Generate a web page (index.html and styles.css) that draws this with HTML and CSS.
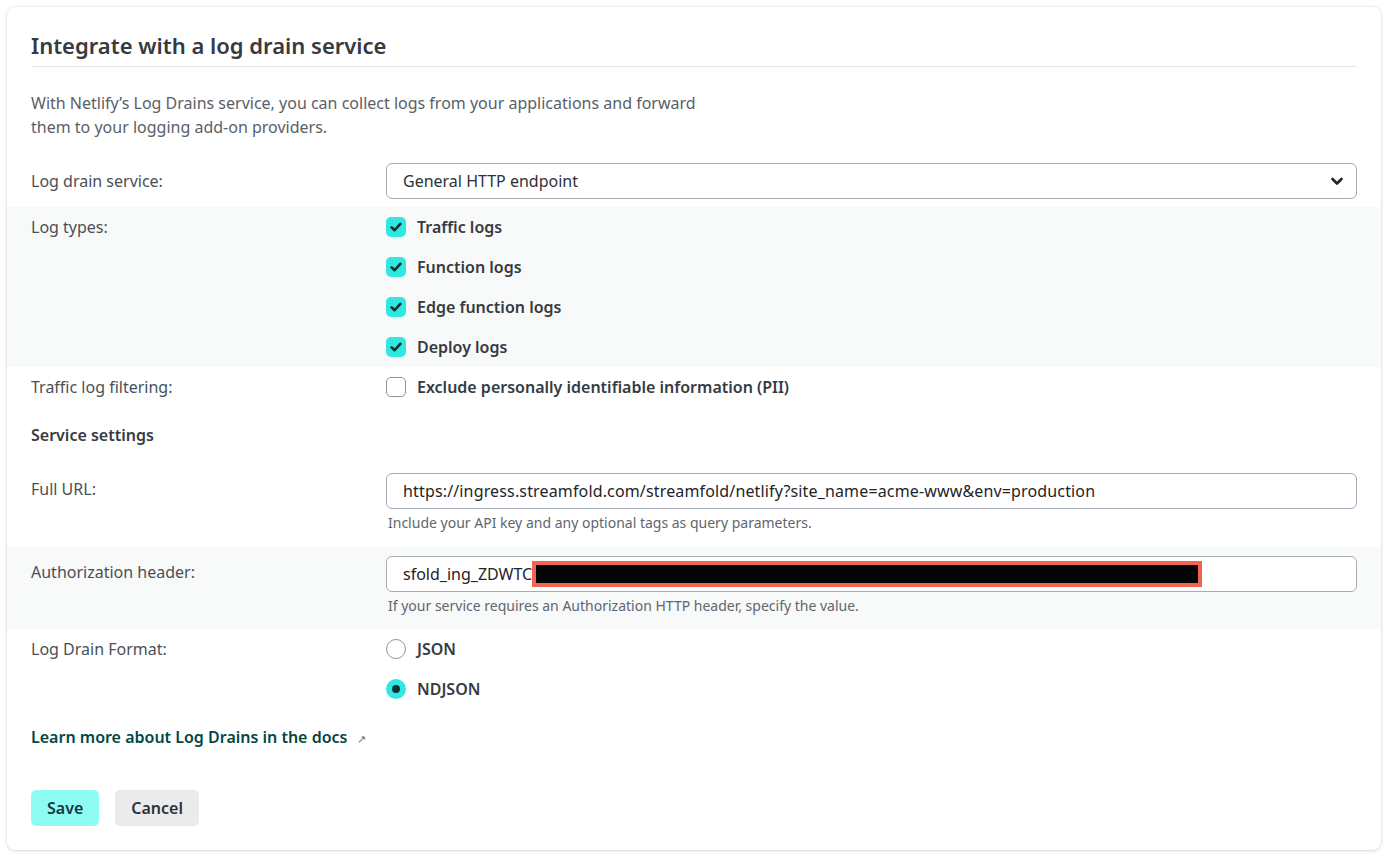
FILE: index.html
```html
<!DOCTYPE html>
<html>
<head>
  <title>Log Drains</title>
  <link rel="stylesheet" href="styles.css">
</head>
<body>
  <div class="card">
    <h2 class="card-title">Integrate with a log drain service</h2>
    <p class="intro">With Netlify’s Log Drains service, you can collect logs from your applications and forward them to your logging add-on providers.</p>

    <div class="row row-input">
      <div class="label">Log drain service:</div>
      <div class="control">
        <div class="select">
          <span>General HTTP endpoint</span>
          <svg class="chevron" width="14" height="14" viewBox="0 0 14 14"><polyline points="2.5,5 7,9.5 11.5,5" fill="none" stroke="#1f2428" stroke-width="2.6" stroke-linecap="round" stroke-linejoin="round"/></svg>
        </div>
      </div>
    </div>

    <div class="row row-options shaded">
      <div class="label">Log types:</div>
      <div class="control">
        <div class="option"><span class="check on"><svg width="14" height="14" viewBox="0 0 14 14"><polyline points="2.6,7.4 5.6,10.2 11.4,3.8" fill="none" stroke="#10302f" stroke-width="2.6" stroke-linecap="round" stroke-linejoin="round"/></svg></span>Traffic logs</div>
        <div class="option"><span class="check on"><svg width="14" height="14" viewBox="0 0 14 14"><polyline points="2.6,7.4 5.6,10.2 11.4,3.8" fill="none" stroke="#10302f" stroke-width="2.6" stroke-linecap="round" stroke-linejoin="round"/></svg></span>Function logs</div>
        <div class="option"><span class="check on"><svg width="14" height="14" viewBox="0 0 14 14"><polyline points="2.6,7.4 5.6,10.2 11.4,3.8" fill="none" stroke="#10302f" stroke-width="2.6" stroke-linecap="round" stroke-linejoin="round"/></svg></span>Edge function logs</div>
        <div class="option"><span class="check on"><svg width="14" height="14" viewBox="0 0 14 14"><polyline points="2.6,7.4 5.6,10.2 11.4,3.8" fill="none" stroke="#10302f" stroke-width="2.6" stroke-linecap="round" stroke-linejoin="round"/></svg></span>Deploy logs</div>
      </div>
    </div>

    <div class="row row-options">
      <div class="label">Traffic log filtering:</div>
      <div class="control">
        <div class="option"><span class="check"></span>Exclude personally identifiable information (PII)</div>
      </div>
    </div>

    <h3 class="section-title">Service settings</h3>

    <div class="row row-field first-field">
      <div class="label">Full URL:</div>
      <div class="control">
        <div class="input url">https://ingress.streamfold.com/streamfold/netlify?site_name=acme-www&amp;env=production</div>
        <div class="help">Include your API key and any optional tags as query parameters.</div>
      </div>
    </div>

    <div class="row row-field shaded">
      <div class="label">Authorization header:</div>
      <div class="control">
        <div class="input">sfold_ing_ZDWTC<span class="redacted"></span></div>
        <div class="help">If your service requires an Authorization HTTP header, specify the value.</div>
      </div>
    </div>

    <div class="row row-options">
      <div class="label">Log Drain Format:</div>
      <div class="control">
        <div class="option"><span class="radio"></span>JSON</div>
        <div class="option"><span class="radio on"></span>NDJSON</div>
      </div>
    </div>

    <a class="docs-link" href="#">Learn more about Log Drains in the docs<span class="ext">↗</span></a>

    <div class="actions">
      <button class="btn btn-primary">Save</button>
      <button class="btn btn-secondary">Cancel</button>
    </div>
  </div>
</body>
</html>
```

FILE: styles.css
```css
body {
  margin: 0;
  background: #fff;
  font-family: "Noto Sans", "Open Sans", sans-serif;
  color: #2f353b;
}

.card {
  margin: 7px 10px 12px 7px;
  padding: 24px 24px 24px 24px;
  background: #fff;
  border-radius: 8px;
  box-shadow: 0 0 0 1px rgba(0, 0, 0, 0.04), 0 1px 4px rgba(0, 0, 0, 0.12);
}

.card-title {
  margin: 0;
  padding-bottom: 7px;
  border-bottom: 1px solid #e4e7ea;
  font-size: 22px;
  line-height: 28px;
  font-weight: 600;
  color: #353b41;
}

.intro {
  margin: 24px 0 24px 0;
  max-width: 680px;
  font-size: 16px;
  line-height: 24px;
  color: #5a6068;
}

.row {
  display: grid;
  grid-template-columns: 355px 1fr;
  margin: 0 -24px;
  padding: 0 24px;
}

.shaded {
  background: #f8f9f9;
}

.label {
  font-size: 16px;
  line-height: 24px;
  color: #4a5057;
}

.row-input {
  padding-bottom: 8px;
}

.row-input .label {
  padding-top: 6px;
}

.row-options .label {
  padding-top: 8px;
}

.row-field {
  padding-top: 9px;
  padding-bottom: 13px;
}

.first-field {
  padding-bottom: 14px;
}

.row-field .label {
  padding-top: 4px;
}

.select {
  display: flex;
  align-items: center;
  justify-content: space-between;
  height: 34px;
  padding: 0 12px 0 16px;
  border: 1px solid #a3acb7;
  border-radius: 6px;
  font-size: 16px;
  color: #2d3238;
}

.option {
  display: flex;
  align-items: center;
  height: 40px;
  font-size: 16px;
  font-weight: 600;
  color: #353b41;
}

.check {
  display: inline-flex;
  align-items: center;
  justify-content: center;
  box-sizing: border-box;
  width: 20px;
  height: 20px;
  margin-right: 11px;
  border: 1.5px solid #8d949c;
  border-radius: 5px;
  background: #fff;
}

.check.on {
  border: none;
  background: #32e6e2;
}

.radio {
  display: inline-flex;
  align-items: center;
  justify-content: center;
  box-sizing: border-box;
  width: 20px;
  height: 20px;
  margin-right: 11px;
  border: 1.5px solid #8d949c;
  border-radius: 50%;
  background: #fff;
}

.radio.on {
  border: none;
  background: #32e6e2;
}

.radio.on::after {
  content: "";
  width: 8px;
  height: 8px;
  border-radius: 50%;
  background: #0e3333;
}

.section-title {
  margin: 16px 0 17px 0;
  font-size: 16px;
  line-height: 24px;
  font-weight: 600;
  color: #353b41;
}

.input {
  display: flex;
  align-items: center;
  height: 34px;
  padding: 0 16px;
  border: 1px solid #a3acb7;
  border-radius: 6px;
  background: #fff;
  font-size: 16px;
  color: #1f2428;
  white-space: nowrap;
}

.input.url {
  letter-spacing: 0.15px;
}

.redacted {
  display: inline-block;
  box-sizing: border-box;
  width: 670px;
  height: 26px;
  border: 4px solid #f26352;
  background: #050505;
}

.help {
  margin-top: 4px;
  padding-left: 2px;
  font-size: 14px;
  line-height: 20px;
  color: #5f666e;
}

.docs-link {
  display: inline-block;
  margin-top: 16px;
  font-size: 16px;
  line-height: 24px;
  font-weight: 600;
  color: #014847;
  text-decoration: none;
}

.ext {
  margin-left: 10px;
  font-size: 11px;
  font-weight: 400;
  color: #6b7278;
}

.actions {
  display: flex;
  gap: 16px;
  margin-top: 39px;
}

.btn {
  height: 36px;
  padding: 0 16px;
  border: none;
  border-radius: 5px;
  font-family: "Noto Sans", "Open Sans", sans-serif;
  font-size: 16px;
  font-weight: 600;
}

.btn-primary {
  background: #8ffcf4;
  color: #0f3a3a;
}

.btn-secondary {
  background: #e9ebed;
  color: #2d3238;
}
```
